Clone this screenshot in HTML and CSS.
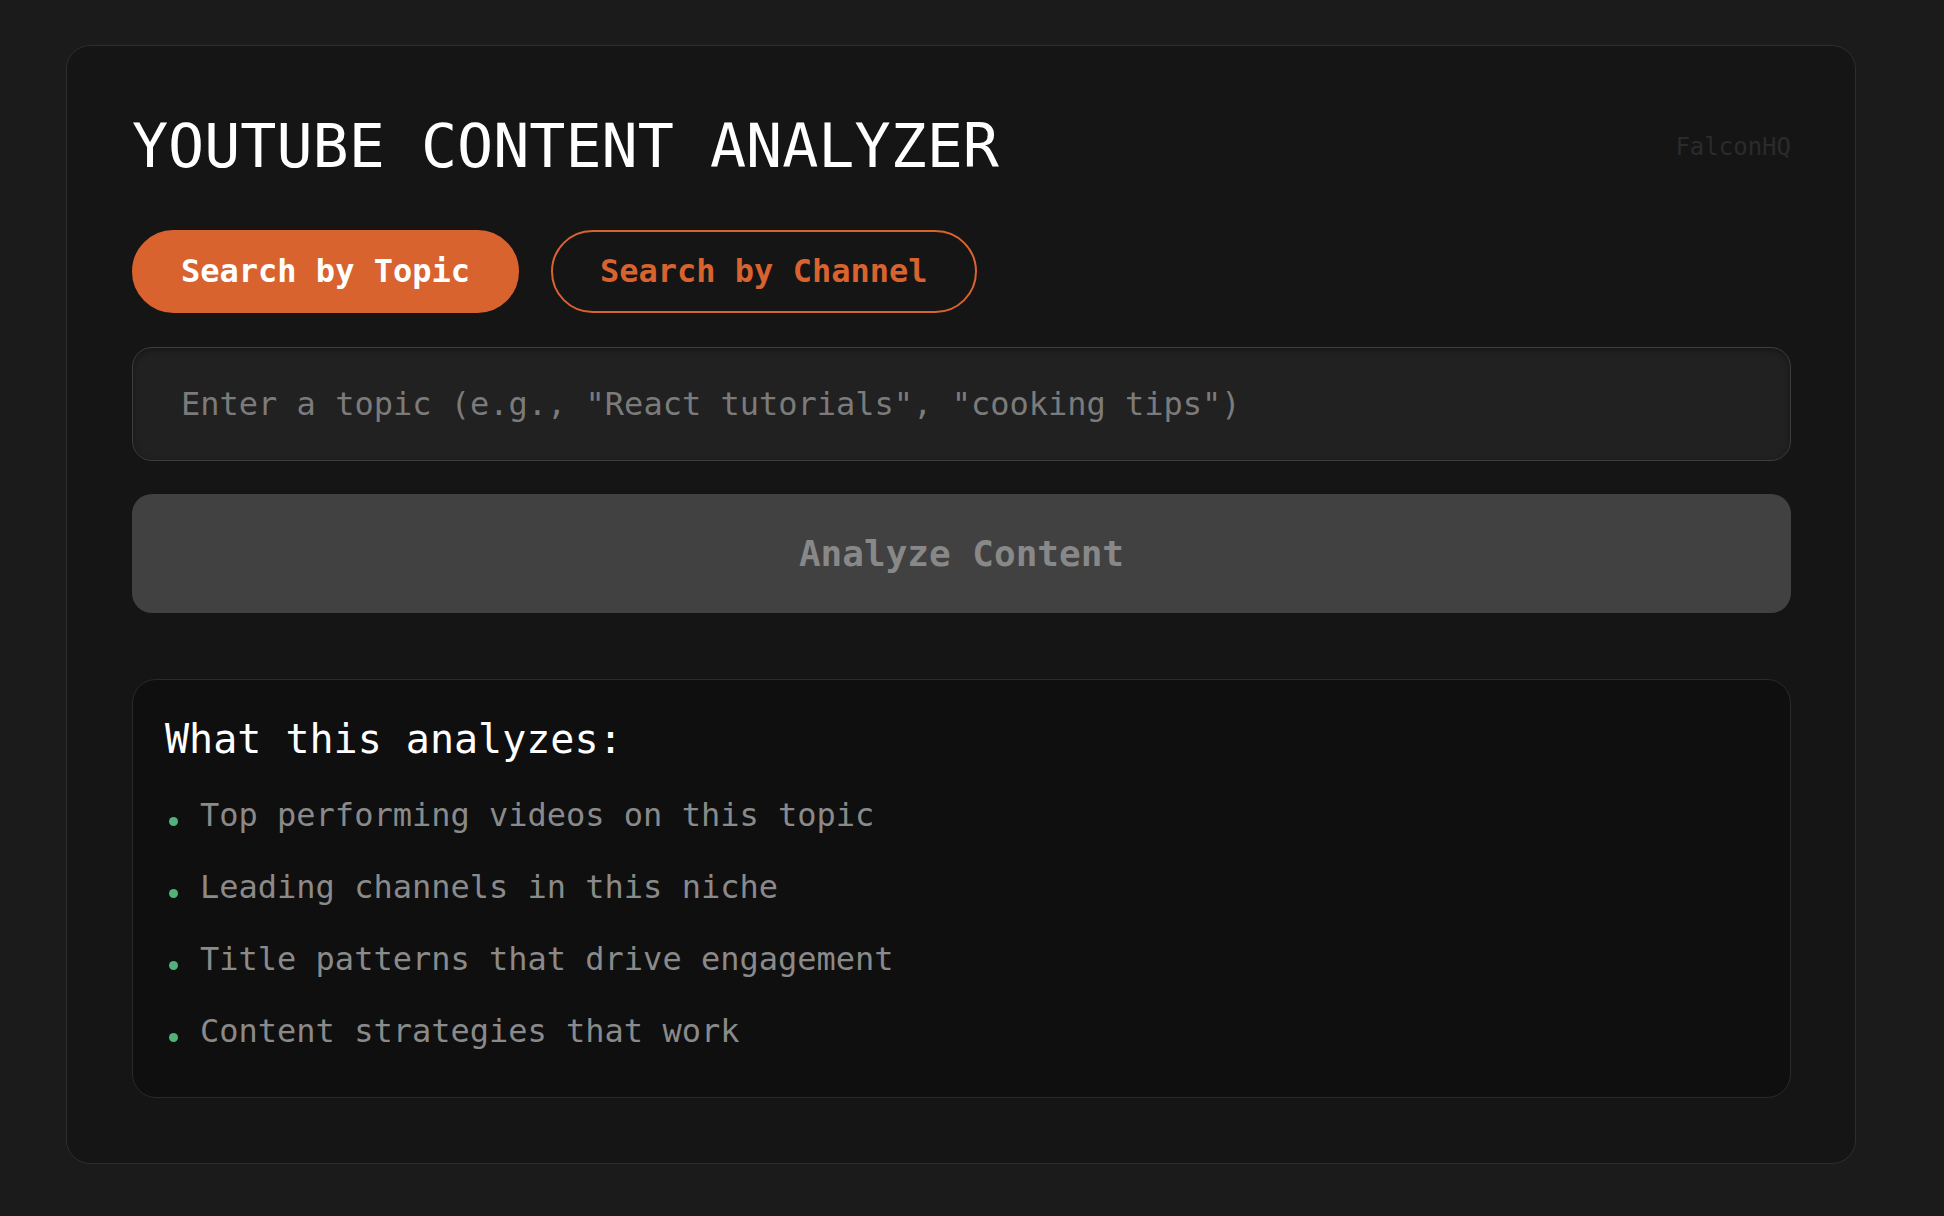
FILE: index.html
```html
<!DOCTYPE html>
<html lang="en">
<head>
<meta charset="utf-8">
<title>YouTube Content Analyzer</title>
<link rel="stylesheet" href="styles.css">
</head>
<body>
<main class="card">
  <header class="header">
    <h1 class="title">YOUTUBE CONTENT ANALYZER</h1>
    <span class="brand">FalconHQ</span>
  </header>
  <div class="tabs">
    <button class="tab tab-active">Search by Topic</button>
    <button class="tab">Search by Channel</button>
  </div>
  <input class="search" type="text" placeholder="Enter a topic (e.g., &quot;React tutorials&quot;, &quot;cooking tips&quot;)">
  <button class="analyze" disabled>Analyze Content</button>
  <section class="info">
    <h2 class="info-title">What this analyzes:</h2>
    <ul class="info-list">
      <li><span class="dot"></span>Top performing videos on this topic</li>
      <li><span class="dot"></span>Leading channels in this niche</li>
      <li><span class="dot"></span>Title patterns that drive engagement</li>
      <li><span class="dot"></span>Content strategies that work</li>
    </ul>
  </section>
</main>
</body>
</html>
```
FILE: styles.css
```css
* { box-sizing: border-box; }
html, body { margin: 0; padding: 0; }
body {
  background: #1b1b1b;
  font-family: "DejaVu Sans Mono", "Liberation Mono", monospace;
  padding: 45px 88px 0 66px;
  min-height: 1216px;
}
.card {
  width: 1790px;
  background: #151515;
  border: 1px solid #2e2e2e;
  border-radius: 24px;
  padding: 64px 64px 65px 65px;
  display: flex;
  flex-direction: column;
}
.header {
  display: flex;
  align-items: center;
  justify-content: space-between;
}
.title {
  margin: 0;
  font-size: 60px;
  line-height: 72px;
  font-weight: normal;
  color: #ffffff;
}
.brand {
  font-size: 24px;
  color: #2b2b2b;
  margin-top: 2px;
}
.tabs {
  display: flex;
  gap: 32px;
  margin-top: 48px;
}
.tab {
  font-family: inherit;
  font-size: 32px;
  font-weight: bold;
  line-height: 39px;
  height: 83px;
  padding: 0 47px;
  border-radius: 42px;
  border: 2px solid #d9632f;
  background: transparent;
  color: #d9632f;
}
.tab-active {
  background: #d9632f;
  color: #ffffff;
}
.search {
  margin-top: 34px;
  height: 114px;
  width: 100%;
  background: #212121;
  border: 1px solid #3d3d3d;
  border-radius: 20px;
  padding: 0 48px;
  font-family: inherit;
  font-size: 32px;
  color: #dddddd;
  box-shadow: inset 0 2px 6px rgba(0,0,0,0.35);
  outline: none;
}
.search::placeholder { color: #7b7b7b; }
.analyze {
  margin-top: 33px;
  height: 119px;
  width: 100%;
  border: none;
  border-radius: 20px;
  background: #414141;
  color: #888888;
  font-family: inherit;
  font-size: 36px;
  font-weight: bold;
}
.info {
  margin-top: 66px;
  background: #0f0f0f;
  border: 1px solid #2a2a2a;
  border-radius: 24px;
  padding: 35px 32px 42px 32px;
}
.info-title {
  margin: 0;
  font-size: 40px;
  line-height: 48px;
  font-weight: normal;
  color: #ffffff;
}
.info-list {
  list-style: none;
  margin: 28px 0 0 0;
  padding: 0;
  display: flex;
  flex-direction: column;
  gap: 24px;
}
.info-list li {
  display: flex;
  align-items: baseline;
  font-size: 32px;
  line-height: 48px;
  color: #8a8a8a;
}
.dot {
  display: inline-block;
  width: 9px;
  height: 9px;
  border-radius: 50%;
  background: #4fb37a;
  margin: 0 22px 0 4px;
  flex: none;
}
```
